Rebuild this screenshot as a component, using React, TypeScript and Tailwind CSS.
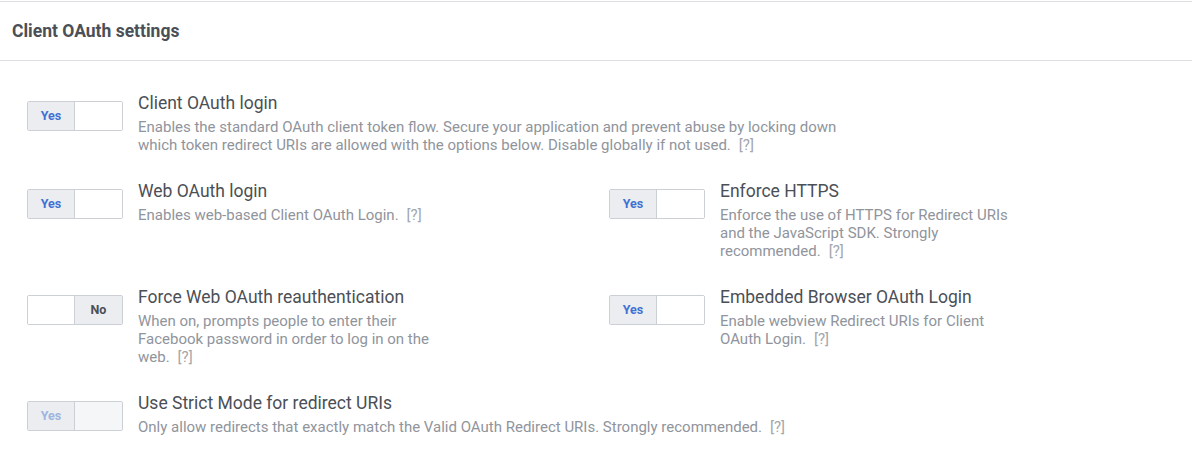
const settings = {
  clientLogin: {
    title: "Client OAuth login",
    desc: "Enables the standard OAuth client token flow. Secure your application and prevent abuse by locking down which token redirect URIs are allowed with the options below. Disable globally if not used.",
  },
};

function Toggle({ on, disabled }: { on: boolean; disabled?: boolean }) {
  return (
    <div className="flex w-[96px] h-[30px] shrink-0 rounded-[2px] border border-[#ccd0d5] overflow-hidden">
      <div
        className={`w-[47px] flex items-center justify-center text-[12.5px] font-bold border-r border-[#ccd0d5] ${
          on ? "bg-[#ebedf0]" : "bg-white"
        } ${disabled ? "text-[#9db5e0]" : "text-[#3f72d4]"}`}
      >
        {on ? "Yes" : ""}
      </div>
      <div
        className={`flex-1 flex items-center justify-center text-[12.5px] font-bold text-[#4b4f56] ${
          on ? (disabled ? "bg-[#f5f6f7]" : "bg-white") : "bg-[#ebedf0]"
        }`}
      >
        {on ? "" : "No"}
      </div>
    </div>
  );
}

function Setting({
  title,
  desc,
  on = true,
  disabled,
  width = "max-w-[720px]",
}: {
  title: string;
  desc: string;
  on?: boolean;
  disabled?: boolean;
  width?: string;
}) {
  return (
    <div className="flex items-start">
      <div className="mt-[8px]">
        <Toggle on={on} disabled={disabled} />
      </div>
      <div className={`ml-[15px] ${width}`}>
        <div className="text-[17.5px] leading-[20px] text-[#4b4f56]">{title}</div>
        <div className="mt-[5px] text-[15px] leading-[18px] text-[#90949c]">
          {desc}
          <span className="ml-[8px] leading-[18px] text-[#a3a6ab]">[?]</span>
        </div>
      </div>
    </div>
  );
}

export default function App() {
  return (
    <main className="min-h-screen bg-white font-['Roboto',sans-serif]">
      <div className="mt-px border-t border-[#dddfe2]">
        <div className="h-[59px] flex items-center px-[12px] border-b border-[#dddfe2]">
          <h2 className="text-[17.5px] font-bold text-[#4b4f56]">Client OAuth settings</h2>
        </div>

        <div className="pl-[27px] pt-[32px] flex flex-col gap-[27px]">
          <Setting title={settings.clientLogin.title} desc={settings.clientLogin.desc} />

          <div className="grid grid-cols-[582px_1fr]">
            <Setting
              title="Web OAuth login"
              desc="Enables web-based Client OAuth Login."
              width="max-w-[300px]"
            />
            <Setting
              title="Enforce HTTPS"
              desc="Enforce the use of HTTPS for Redirect URIs and the JavaScript SDK. Strongly recommended."
              width="max-w-[300px]"
            />
          </div>

          <div className="grid grid-cols-[582px_1fr]">
            <Setting
              title="Force Web OAuth reauthentication"
              desc="When on, prompts people to enter their Facebook password in order to log in on the web."
              on={false}
              width="max-w-[300px]"
            />
            <Setting
              title="Embedded Browser OAuth Login"
              desc="Enable webview Redirect URIs for Client OAuth Login."
              width="max-w-[300px]"
            />
          </div>

          <Setting
            title="Use Strict Mode for redirect URIs"
            desc="Only allow redirects that exactly match the Valid OAuth Redirect URIs. Strongly recommended."
            disabled
          />
        </div>
      </div>
    </main>
  );
}
